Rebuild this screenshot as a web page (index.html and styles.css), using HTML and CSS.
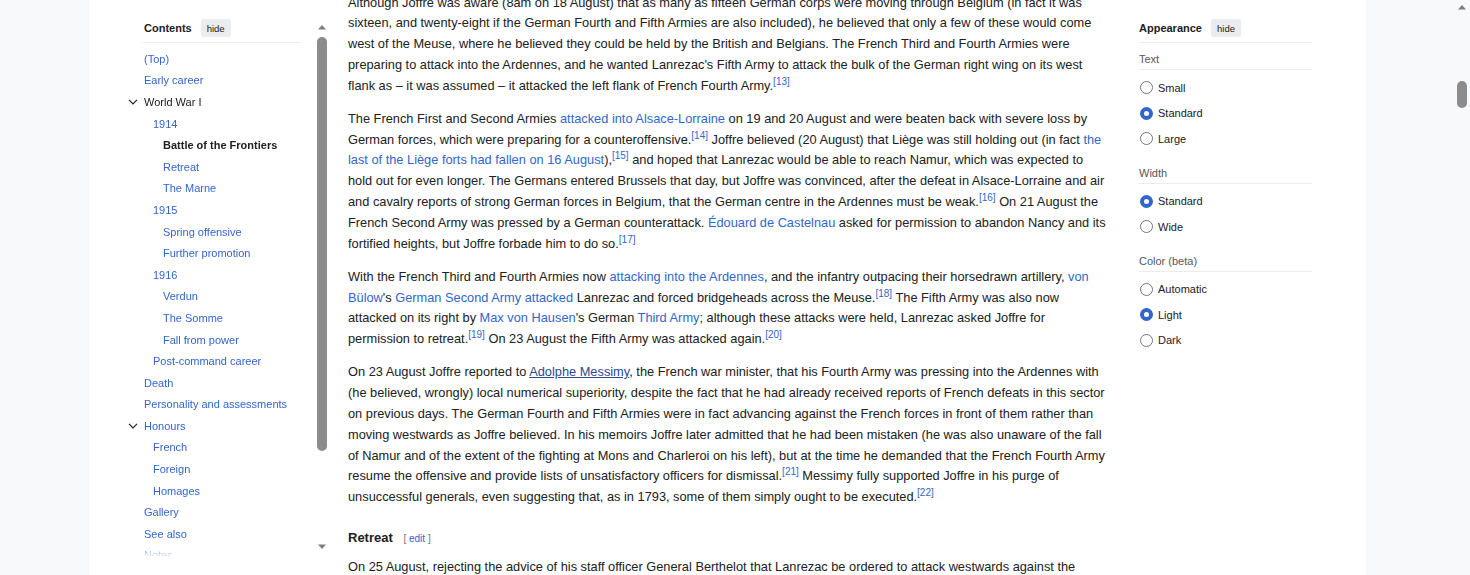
FILE: index.html
```html
<!DOCTYPE html>
<html lang="en">
<head>
  <meta charset="UTF-8">
  <title>Joseph Joffre - Wikipedia</title>
  <link rel="stylesheet" href="styles.css">
</head>
<body>
  <div class="side"></div>
  <div class="page">
    <nav class="toc">
      <div class="toc-inner">
        <div class="panel-head">
          <span class="panel-title">Contents</span>
          <button class="hide-btn">hide</button>
        </div>
        <ul class="toc-list">
          <li class="lvl1"><span class="toggle"></span><a href="#">(Top)</a></li>
          <li class="lvl1"><span class="toggle"></span><a href="#">Early career</a></li>
          <li class="lvl1"><span class="toggle"><svg width="10" height="6" viewBox="0 0 10 6"><path d="M1 0.8 L5 4.8 L9 0.8" fill="none" stroke="#202122" stroke-width="1.2"/></svg></span><a href="#" class="plain">World War I</a></li>
          <li class="lvl2"><span class="toggle"></span><a href="#">1914</a></li>
          <li class="lvl3"><span class="toggle"></span><a href="#" class="active">Battle of the Frontiers</a></li>
          <li class="lvl3"><span class="toggle"></span><a href="#">Retreat</a></li>
          <li class="lvl3"><span class="toggle"></span><a href="#">The Marne</a></li>
          <li class="lvl2"><span class="toggle"></span><a href="#">1915</a></li>
          <li class="lvl3"><span class="toggle"></span><a href="#">Spring offensive</a></li>
          <li class="lvl3"><span class="toggle"></span><a href="#">Further promotion</a></li>
          <li class="lvl2"><span class="toggle"></span><a href="#">1916</a></li>
          <li class="lvl3"><span class="toggle"></span><a href="#">Verdun</a></li>
          <li class="lvl3"><span class="toggle"></span><a href="#">The Somme</a></li>
          <li class="lvl3"><span class="toggle"></span><a href="#">Fall from power</a></li>
          <li class="lvl2"><span class="toggle"></span><a href="#">Post-command career</a></li>
          <li class="lvl1"><span class="toggle"></span><a href="#">Death</a></li>
          <li class="lvl1"><span class="toggle"></span><a href="#">Personality and assessments</a></li>
          <li class="lvl1"><span class="toggle"><svg width="10" height="6" viewBox="0 0 10 6"><path d="M1 0.8 L5 4.8 L9 0.8" fill="none" stroke="#202122" stroke-width="1.2"/></svg></span><a href="#">Honours</a></li>
          <li class="lvl2"><span class="toggle"></span><a href="#">French</a></li>
          <li class="lvl2"><span class="toggle"></span><a href="#">Foreign</a></li>
          <li class="lvl2"><span class="toggle"></span><a href="#">Homages</a></li>
          <li class="lvl1"><span class="toggle"></span><a href="#">Gallery</a></li>
          <li class="lvl1"><span class="toggle"></span><a href="#">See also</a></li>
          <li class="lvl1"><span class="toggle"></span><a href="#">Notes</a></li>
        </ul>
      </div>
      <div class="scrollbar toc-bar">
        <svg class="arrow" width="10" height="6" viewBox="0 0 10 6"><polygon points="1,5.5 9,5.5 5,1" fill="#7d7d7d"/></svg>
        <div class="thumb toc-thumb"></div>
        <div class="track-rest"></div>
        <svg class="arrow" width="10" height="6" viewBox="0 0 10 6"><polygon points="1,0.5 9,0.5 5,5" fill="#7d7d7d"/></svg>
      </div>
    </nav>

    <main class="content">
      <p>Although Joffre was aware (8am on 18 August) that as many as fifteen German corps were moving through Belgium (in fact it was sixteen, and twenty-eight if the German Fourth and Fifth Armies are also included), he believed that only a few of these would come west of the Meuse, where he believed they could be held by the British and Belgians. The French Third and Fourth Armies were preparing to attack into the Ardennes, and he wanted Lanrezac's Fifth Army to attack the bulk of the German right wing on its west flank as – it was assumed – it attacked the left flank of French Fourth Army.<sup><a href="#">[13]</a></sup></p>
      <p>The French First and Second Armies <a href="#">attacked into Alsace-Lorraine</a> on 19 and 20 August and were beaten back with severe loss by German forces, which were preparing for a counteroffensive.<sup><a href="#">[14]</a></sup> Joffre believed (20 August) that Liège was still holding out (in fact <a href="#">the last of the Liège forts had fallen on 16 August</a>),<sup><a href="#">[15]</a></sup> and hoped that Lanrezac would be able to reach Namur, which was expected to hold out for even longer. The Germans entered Brussels that day, but Joffre was convinced, after the defeat in Alsace-Lorraine and air and cavalry reports of strong German forces in Belgium, that the German centre in the Ardennes must be weak.<sup><a href="#">[16]</a></sup> On 21 August the French Second Army was pressed by a German counterattack. <a href="#">Édouard de Castelnau</a> asked for permission to abandon Nancy and its fortified heights, but Joffre forbade him to do so.<sup><a href="#">[17]</a></sup></p>
      <p>With the French Third and Fourth Armies now <a href="#">attacking into the Ardennes</a>, and the infantry outpacing their horsedrawn artillery, <a href="#">von Bülow</a>'s <a href="#">German Second Army attacked</a> Lanrezac and forced bridgeheads across the Meuse.<sup><a href="#">[18]</a></sup> The Fifth Army was also now attacked on its right by <a href="#">Max von Hausen</a>'s German <a href="#">Third Army</a>; although these attacks were held, Lanrezac asked Joffre for permission to retreat.<sup><a href="#">[19]</a></sup> On 23 August the Fifth Army was attacked again.<sup><a href="#">[20]</a></sup></p>
      <p>On 23 August Joffre reported to <a href="#" class="hover">Adolphe Messimy</a>, the French war minister, that his Fourth Army was pressing into the Ardennes with (he believed, wrongly) local numerical superiority, despite the fact that he had already received reports of French defeats in this sector on previous days. The German Fourth and Fifth Armies were in fact advancing against the French forces in front of them rather than moving westwards as Joffre believed. In his memoirs Joffre later admitted that he had been mistaken (he was also unaware of the fall of Namur and of the extent of the fighting at Mons and Charleroi on his left), but at the time he demanded that the French Fourth Army resume the offensive and provide lists of unsatisfactory officers for dismissal.<sup><a href="#">[21]</a></sup> Messimy fully supported Joffre in his purge of unsuccessful generals, even suggesting that, as in 1793, some of them simply ought to be executed.<sup><a href="#">[22]</a></sup></p>
      <h3>Retreat <span class="edit">[ <a href="#">edit</a> ]</span></h3>
      <p>On 25 August, rejecting the advice of his staff officer General Berthelot that Lanrezac be ordered to attack westwards against the German right flank, Joffre ordered a general retreat.</p>
    </main>

    <aside class="appearance">
      <div class="panel-head">
        <span class="panel-title">Appearance</span>
        <button class="hide-btn">hide</button>
      </div>
      <div class="opt-group first">
        <div class="opt-label">Text</div>
        <div class="opt"><span class="radio"></span>Small</div>
        <div class="opt"><span class="radio checked"></span>Standard</div>
        <div class="opt"><span class="radio"></span>Large</div>
      </div>
      <div class="opt-group">
        <div class="opt-label">Width</div>
        <div class="opt"><span class="radio checked"></span>Standard</div>
        <div class="opt"><span class="radio"></span>Wide</div>
      </div>
      <div class="opt-group">
        <div class="opt-label">Color (beta)</div>
        <div class="opt"><span class="radio"></span>Automatic</div>
        <div class="opt"><span class="radio checked"></span>Light</div>
        <div class="opt"><span class="radio"></span>Dark</div>
      </div>
    </aside>
  </div>
  <div class="side side-right">
    <div class="scrollbar page-bar">
      <svg class="arrow" width="10" height="6" viewBox="0 0 10 6"><polygon points="1,5.5 9,5.5 5,1" fill="#7d7d7d"/></svg>
      <div class="thumb page-thumb"></div>
    </div>
  </div>
</body>
</html>
```

FILE: styles.css
```css
html, body { margin: 0; height: 575px; overflow: hidden; }
body {
  display: flex;
  background: #f8f9fa;
  color: #202122;
  font-family: "Liberation Sans", Arial, sans-serif;
}
a { color: #3366cc; text-decoration: none; }
a.hover { color: #2a4b8d; text-decoration: underline; }

.side { width: 89px; flex: none; }
.side-right { width: 104px; display: flex; justify-content: flex-end; }

.page {
  width: 1277px;
  flex: none;
  height: 575px;
  background: #fff;
  display: flex;
  padding-left: 39px;
  box-sizing: border-box;
  overflow: hidden;
}

/* scrollbars */
.scrollbar { display: flex; flex-direction: column; align-items: center; width: 10px; }
.thumb { width: 10px; background: #8c8c8c; border-radius: 5px; }
.track-rest { flex: 1; }
.toc-bar { padding: 5px 0 6px; }
.toc-thumb { height: 414px; margin-top: 7px; }
.page-bar { margin-right: 3px; padding-top: 4px; }
.page-thumb { height: 27px; margin-top: 71px; }

/* contents */
.toc {
  width: 199px;
  flex: none;
  height: 537px;
  margin-top: 19px;
  display: flex;
}
.toc-inner { flex: 1; overflow: hidden; }
.panel-head {
  display: flex;
  align-items: center;
  gap: 9px;
  height: 18px;
  padding-bottom: 5px;
  border-bottom: 1px solid #eaecf0;
}
.toc .panel-head { margin: 0 16px 0 15px; padding-left: 1px; }
.panel-title { font-size: 11px; font-weight: bold; }
.hide-btn {
  font-family: inherit;
  font-size: 9.5px;
  color: #202122;
  background: #eaecf0;
  border: 0;
  border-radius: 2px;
  height: 18px;
  padding: 0 6px;
}
.toc-list {
  list-style: none;
  margin: 5px 0 0;
  padding: 0;
  font-size: 11px;
  height: 508px;
  overflow: hidden;
  -webkit-mask-image: linear-gradient(to bottom, #000 calc(100% - 14px), rgba(0, 0, 0, 0.15));
  mask-image: linear-gradient(to bottom, #000 calc(100% - 14px), rgba(0, 0, 0, 0.15));
}
.toc-list li { display: flex; align-items: center; height: 21.6px; white-space: nowrap; }
.toggle { width: 16px; flex: none; display: flex; }
.lvl2 a { padding-left: 9px; }
.lvl3 a { padding-left: 19px; }
.toc-list a.plain { color: #202122; }
.toc-list a.active { color: #202122; font-weight: bold; }

/* article */
.content {
  width: 762px;
  flex: none;
  margin: -7.5px 0 0 21px;
  font-size: 12.8px;
  line-height: 20.8px;
}
.content p { margin: 0 0 12.4px; }
sup { font-size: 10px; line-height: 1; vertical-align: 5px; }
h3 {
  font-size: 13px;
  line-height: 20px;
  margin: 20px 0 7.6px;
}
.edit { font-weight: normal; font-size: 10px; color: #72777d; margin-left: 7px; }

/* appearance */
.appearance {
  width: 173px;
  flex: none;
  margin: 19px 0 0 29px;
  font-size: 11px;
}
.opt-group { margin-top: 13px; }
.opt-group.first { margin-top: 8px; }
.opt-label {
  color: #54595d;
  line-height: 16px;
  padding-bottom: 2px;
  border-bottom: 1px solid #eaecf0;
  margin-bottom: 5px;
}
.opt { display: flex; align-items: center; height: 25.5px; gap: 5px; }
.radio {
  width: 13px;
  height: 13px;
  box-sizing: border-box;
  border: 1px solid #72777d;
  border-radius: 50%;
  margin-left: 1px;
}
.radio.checked { border: 4px solid #3366cc; }
```
